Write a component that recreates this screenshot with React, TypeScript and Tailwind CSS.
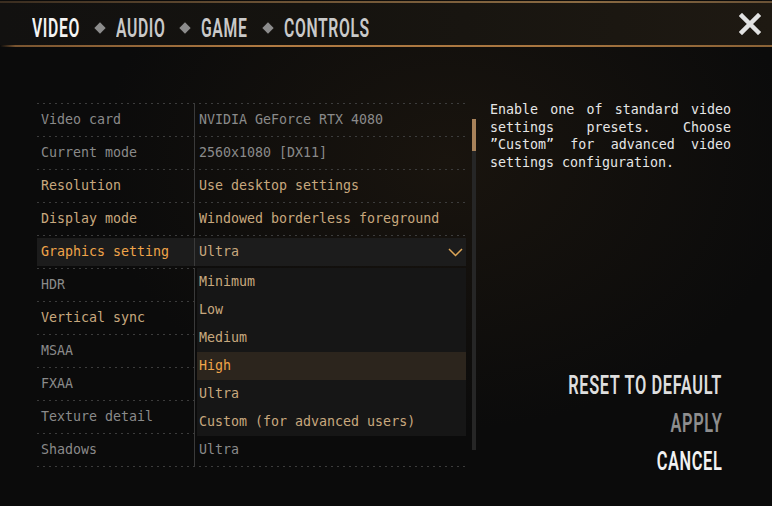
type Tone = "dim" | "on" | "active";

const toneClass: Record<Tone, string> = {
  dim: "text-[#8a8a8a]",
  on: "text-[#c8a87e]",
  active: "text-[#f0a44a]",
};

const rows: { label: string; value: string; labelTone: Tone; valueTone: Tone; open?: boolean }[] = [
  { label: "Video card", value: "NVIDIA GeForce RTX 4080", labelTone: "dim", valueTone: "dim" },
  { label: "Current mode", value: "2560x1080 [DX11]", labelTone: "dim", valueTone: "dim" },
  { label: "Resolution", value: "Use desktop settings", labelTone: "on", valueTone: "on" },
  { label: "Display mode", value: "Windowed borderless foreground", labelTone: "on", valueTone: "on" },
  { label: "Graphics setting", value: "Ultra", labelTone: "active", valueTone: "on", open: true },
  { label: "HDR", value: "", labelTone: "dim", valueTone: "dim" },
  { label: "Vertical sync", value: "", labelTone: "on", valueTone: "on" },
  { label: "MSAA", value: "", labelTone: "dim", valueTone: "dim" },
  { label: "FXAA", value: "", labelTone: "dim", valueTone: "dim" },
  { label: "Texture detail", value: "", labelTone: "dim", valueTone: "dim" },
  { label: "Shadows", value: "Ultra", labelTone: "dim", valueTone: "dim" },
];

const presets = ["Minimum", "Low", "Medium", "High", "Ultra", "Custom (for advanced users)"];

const tabs = [
  { name: "VIDEO", w: "w-[48px]", active: true },
  { name: "AUDIO", w: "w-[49px]" },
  { name: "GAME", w: "w-[47px]" },
  { name: "CONTROLS", w: "w-[83px]" },
];

function DottedLine() {
  return <div className="h-px w-full bg-[repeating-linear-gradient(90deg,#3c3c3c_0_2px,transparent_2px_6px)]" />;
}

// condensed display text: box keeps the real width, the glyphs are squeezed into it
function Squeezed({ text, w, className }: { text: string; w: string; className: string }) {
  return (
    <span className={`inline-flex ${w} whitespace-nowrap`}>
      <span className={`inline-block origin-left scale-x-[0.63] font-semibold tracking-[1px] ${className}`}>{text}</span>
    </span>
  );
}

function SqueezedRight({ text, w, className }: { text: string; w: string; className: string }) {
  return (
    <span className={`inline-flex justify-end ${w} whitespace-nowrap`}>
      <span className={`inline-block shrink-0 origin-right scale-x-[0.63] font-semibold tracking-[1px] ${className}`}>{text}</span>
    </span>
  );
}

function Row({ row }: { row: (typeof rows)[number] }) {
  return (
    <div className="relative h-[32px]">
      <div className={`flex h-full ${row.open ? "py-[2px]" : ""}`}>
        <div className={`flex w-full ${row.open ? "bg-[#1c1c1c]" : ""}`}>
          <div className={`flex w-[158px] shrink-0 items-center border-r border-[#3a3a3a] pl-[4px] ${toneClass[row.labelTone]}`}>
            {row.label}
          </div>
          <div className={`flex flex-1 items-center justify-between pl-[4px] pr-[3px] ${toneClass[row.valueTone]}`}>
            <span>{row.value}</span>
            {row.open && (
              <svg width="15" height="9" viewBox="0 0 15 9">
                <path d="M1 1L7.5 7.5L14 1" fill="none" stroke="#dca556" strokeWidth="1.5" />
              </svg>
            )}
          </div>
        </div>
      </div>
      {row.open && (
        <div className="absolute left-[160px] top-full z-10 flex w-[269px] flex-col bg-[#161616]">
          {presets.map((p) => (
            <div
              key={p}
              className={`flex h-[28px] items-center pl-[2px] ${p === "High" ? "bg-[#2c251d] text-[#f0a44a]" : "text-[#c8a87e]"}`}
            >
              {p}
            </div>
          ))}
        </div>
      )}
    </div>
  );
}

export default function App() {
  return (
    <div className="relative h-[506px] w-[772px] overflow-hidden bg-[#0b0b0b] bg-[radial-gradient(ellipse_at_58%_32%,#19140e_0%,transparent_55%)] font-['DejaVu_Sans_Mono',monospace] text-[13.3px]">
      {/* Header */}
      <div className="mt-px h-[2px] bg-[linear-gradient(90deg,#3a2d20_0%,#6a5134_35%,#8a6a42_75%,#6a5236_100%)]" />
      <div className="flex h-[42px] items-center justify-between bg-[linear-gradient(90deg,#121110_0%,#15130f_40%,#1e1912_100%)] pl-[32px] pt-[8px] font-['Roboto',sans-serif] text-[25px] leading-none">
        <div className="flex items-center">
          {tabs.map((t, i) => (
            <div key={t.name} className="flex items-center">
              {i > 0 && (
                <span className="ml-[14px] mr-[10px] flex h-[12px] w-[12px] items-center justify-center">
                  <span className="h-[8px] w-[8px] rotate-45 bg-[#8c8c8c]" />
                </span>
              )}
              <Squeezed text={t.name} w={t.w} className={t.active ? "text-[#f4f4f4]" : "text-[#c9c9c9]"} />
            </div>
          ))}
        </div>
        <svg width="22" height="22" viewBox="0 0 22 22" className="mr-[11px] mt-[2px] self-start">
          <path d="M3 3L19 19M19 3L3 19" stroke="#e2e2e2" strokeWidth="4.5" strokeLinecap="square" />
        </svg>
      </div>
      <div className="h-[2px] bg-[linear-gradient(90deg,transparent_0%,#7a5530_2%,#b07a42_35%,#a87640_70%,#8a6236_100%)]" />

      {/* Body */}
      <div className="mt-[56px] flex pl-[37px]">
        <div className="flex w-[429px] shrink-0 flex-col">
          <DottedLine />
          {rows.map((r) => (
            <div key={r.label} className="flex flex-col">
              <Row row={r} />
              <DottedLine />
            </div>
          ))}
        </div>
        <div className="ml-[6px] mt-[16px] flex h-[331px] w-[4px] flex-col bg-[#262626]">
          <div className="h-[32px] bg-[#a8825a]" />
        </div>
        <div className="ml-[14px] mt-[-2px] flex flex-col">
          <p className="w-[241px] text-justify leading-[17.5px] text-[#e6e6e6]">
            Enable one of standard video settings presets. Choose ”Custom” for advanced video settings configuration.
          </p>
          <div className="mr-[9px] mt-[195px] flex flex-col items-end font-['Roboto',sans-serif] text-[26px] leading-none">
            <div className="flex h-[38px] items-center">
              <SqueezedRight text="RESET TO DEFAULT" w="w-[154px]" className="text-[#dedede]" />
            </div>
            <div className="flex h-[38px] items-center">
              <SqueezedRight text="APPLY" w="w-[50px]" className="text-[#8e8e8e]" />
            </div>
            <div className="flex h-[38px] items-center">
              <SqueezedRight text="CANCEL" w="w-[62px]" className="text-[#f2f2f2]" />
            </div>
          </div>
        </div>
      </div>
    </div>
  );
}
